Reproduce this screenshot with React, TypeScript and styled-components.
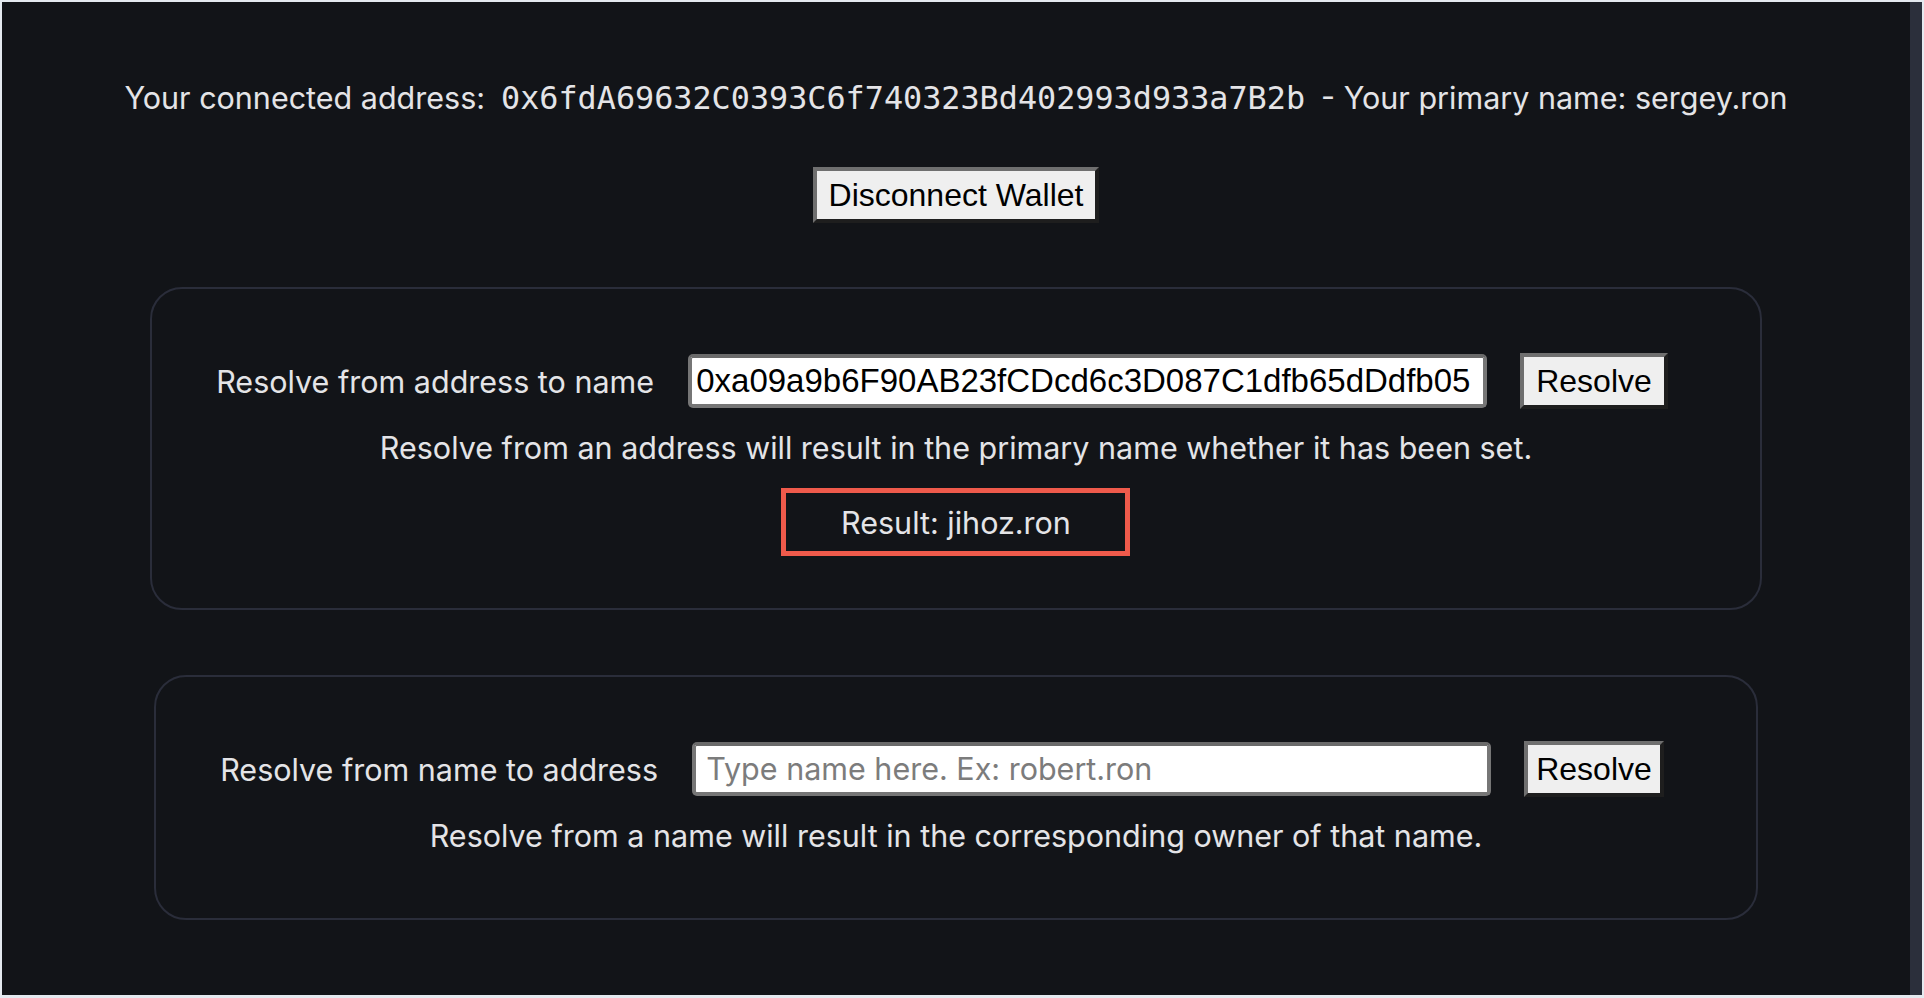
import React, { useState } from 'react';
import styled, { createGlobalStyle } from 'styled-components';

const GlobalStyle = createGlobalStyle`
  html, body {
    margin: 0;
    padding: 0;
    background: #e4e9ef;
  }
  body {
    font-family: Inter, "Noto Sans", sans-serif;
  }
  * {
    box-sizing: border-box;
  }
`;

const Frame = styled.div`
  display: flex;
  height: 998px;
  padding: 2px 2px 3px 2px;
`;

const Viewport = styled.main`
  flex: 1;
  background: #121418;
  color: #e4e4e7;
  padding-top: 78px;
  display: flex;
  flex-direction: column;
  align-items: center;
`;

const ScrollTrack = styled.div`
  width: 12px;
  background: #2b2f3b;
`;

const Header = styled.p`
  margin: 0;
  font-size: 30.5px;
  line-height: 36px;
  white-space: nowrap;
`;

const Address = styled.code`
  font-family: "DejaVu Sans Mono", "Liberation Mono", monospace;
  font-size: 31.8px;
  margin: 0 16px;
`;

const NativeButton = styled.button<{ $compact?: boolean }>`
  font-family: "Liberation Sans", Arial, sans-serif;
  font-size: 32px;
  color: #000;
  background: #efefef;
  height: 56px;
  padding: 0 ${p => (p.$compact ? 8 : 12)}px;
  border-width: 4px;
  border-style: solid;
  border-color: #6f6f6f #1e1e1e #1e1e1e #6f6f6f;
  border-radius: 0;
  cursor: pointer;
  flex-shrink: 0;
`;

const DisconnectButton = styled(NativeButton)`
  margin-top: 51px;
  height: 56px;
`;

const Stack = styled.div`
  display: flex;
  flex-direction: column;
  align-items: center;
  gap: 65px;
  margin-top: 64px;
`;

const Card = styled.section`
  width: fit-content;
  display: flex;
  flex-direction: column;
  border: 2px solid #2a2d3a;
  border-radius: 32px;
  padding: 64px 64px 52px;
`;

const Row = styled.div`
  display: flex;
  align-items: center;
  gap: 33px;
  margin-right: 28px;
`;

const Label = styled.span`
  font-size: 30.5px;
  white-space: nowrap;
  width: 439px;
`;

const TextInput = styled.input<{ $inset: number }>`
  width: 799px;
  height: 54px;
  padding: 0 4px 0 ${p => p.$inset}px;
  font-family: "Liberation Sans", Arial, sans-serif;
  font-size: 33px;
  color: #000;
  background: #fff;
  border: 4px solid #767676;
  border-top-color: #6a6a6a;
  border-radius: 5px;
  outline: none;

  &::placeholder {
    font-family: Inter, "Noto Sans", sans-serif;
    font-size: 30.5px;
    color: #7c7c7c;
  }
`;

const Note = styled.p`
  margin: 21px 0 12px;
  font-size: 30.5px;
  line-height: 36px;
  text-align: center;
  white-space: nowrap;
`;

const Result = styled.div`
  align-self: center;
  width: 349px;
  height: 68px;
  margin-top: 10px;
  display: flex;
  align-items: center;
  justify-content: center;
  border: 5px solid #ef5a4b;
  font-size: 30.5px;
`;

const resolvers = [
  {
    label: 'Resolve from address to name',
    placeholder: 'Type address here',
    initial: '0xa09a9b6F90AB23fCDcd6c3D087C1dfb65dDdfb05',
    note: 'Resolve from an address will result in the primary name whether it has been set.',
    result: 'jihoz.ron',
    compact: false,
  },
  {
    label: 'Resolve from name to address',
    placeholder: 'Type name here. Ex: robert.ron',
    initial: '',
    note: 'Resolve from a name will result in the corresponding owner of that name.',
    result: '',
    compact: true,
  },
];

const ResolverCard: React.FC<(typeof resolvers)[number]> = ({ label, placeholder, initial, note, result, compact }) => {
  const [value, setValue] = useState(initial);

  return (
    <Card>
      <Row>
        <Label>{label}</Label>
        <TextInput
          $inset={value ? 4 : 10}
          value={value}
          placeholder={placeholder}
          onChange={e => setValue(e.target.value)}
        />
        <NativeButton $compact={compact}>Resolve</NativeButton>
      </Row>
      <Note>{note}</Note>
      {result && <Result>Result: {result}</Result>}
    </Card>
  );
};

const App: React.FC = () => {
  return (
    <>
      <GlobalStyle />
      <Frame>
        <Viewport>
          <Header>
            Your connected address:
            <Address>0x6fdA69632C0393C6f740323Bd402993d933a7B2b</Address>
            - Your primary name: sergey.ron
          </Header>
          <DisconnectButton>Disconnect Wallet</DisconnectButton>
          <Stack>
            {resolvers.map(r => (
              <ResolverCard key={r.label} {...r} />
            ))}
          </Stack>
        </Viewport>
        <ScrollTrack />
      </Frame>
    </>
  );
};

export default App;
